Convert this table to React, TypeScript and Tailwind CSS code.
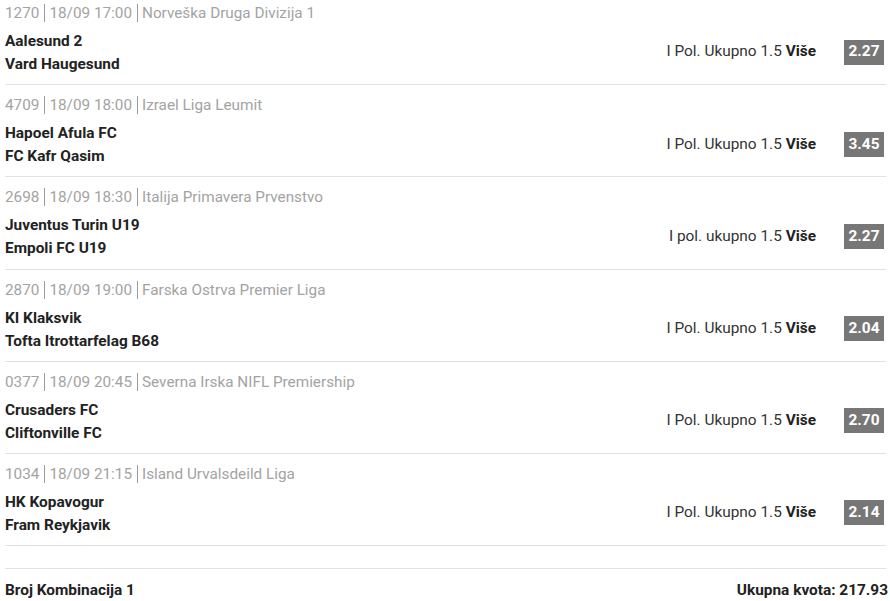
const MATCHES = [
  { id: "1270", time: "18/09 17:00", league: "Norveška Druga Divizija 1", home: "Aalesund 2", away: "Vard Haugesund", market: "I Pol. Ukupno 1.5", odd: "2.27" },
  { id: "4709", time: "18/09 18:00", league: "Izrael Liga Leumit", home: "Hapoel Afula FC", away: "FC Kafr Qasim", market: "I Pol. Ukupno 1.5", odd: "3.45" },
  { id: "2698", time: "18/09 18:30", league: "Italija Primavera Prvenstvo", home: "Juventus Turin U19", away: "Empoli FC U19", market: "I pol. ukupno 1.5", odd: "2.27" },
  { id: "2870", time: "18/09 19:00", league: "Farska Ostrva Premier Liga", home: "KI Klaksvik", away: "Tofta Itrottarfelag B68", market: "I Pol. Ukupno 1.5", odd: "2.04" },
  { id: "0377", time: "18/09 20:45", league: "Severna Irska NIFL Premiership", home: "Crusaders FC", away: "Cliftonville FC", market: "I Pol. Ukupno 1.5", odd: "2.70" },
  { id: "1034", time: "18/09 21:15", league: "Island Urvalsdeild Liga", home: "HK Kopavogur", away: "Fram Reykjavik", market: "I Pol. Ukupno 1.5", odd: "2.14" },
];

export default function App() {
  return (
    <div className="w-[890px] h-[601px] overflow-hidden bg-white font-['Roboto',sans-serif] text-[15.4px]">
      <div className="pl-[5px] pr-[4px] -mt-[7px]">
        {MATCHES.map((m) => (
          <div key={m.id} className="border-b border-[#e2e2e2] pt-[10px] pb-[8.2px]">
            <div className="flex items-center h-[20px] text-[#a3a3a3] leading-[20px] text-[15.3px]">
              <span>{m.id}</span>
              <span className="ml-[5px] mr-[4px] h-[18px] border-l border-[#9a9a9a]" />
              <span>{m.time}</span>
              <span className="ml-[5px] mr-[4px] h-[18px] border-l border-[#9a9a9a]" />
              <span>{m.league}</span>
            </div>
            <div className="mt-[7px] flex items-center">
              <div className="flex-1 font-bold text-[#222] leading-[23px]">
                <div>{m.home}</div>
                <div>{m.away}</div>
              </div>
              <div className="text-[#333] mr-[28px] -mt-[2px]">
                {m.market} <span className="font-bold text-[#222]">Više</span>
              </div>
              <div className="w-[40px] h-[25px] mr-[2px] -mt-[2px] flex items-center justify-center bg-[#777] text-white font-bold">
                {m.odd}
              </div>
            </div>
          </div>
        ))}
        <div className="h-[23px] border-b border-[#e2e2e2]" />
        <div className="flex justify-between items-center pt-[11px] font-bold text-[#222] leading-[20px]">
          <span>Broj Kombinacija 1</span>
          <span className="-mr-[2px]">Ukupna kvota: 217.93</span>
        </div>
      </div>
    </div>
  );
}
